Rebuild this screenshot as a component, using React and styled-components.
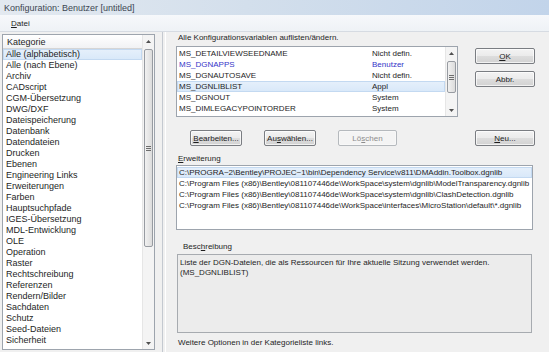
import React from 'react';
import styled, { createGlobalStyle, css } from 'styled-components';

const GlobalStyle = createGlobalStyle`
  html, body {
    margin: 0;
    padding: 0;
    background: #f0f0f0;
  }
  body {
    font-family: "Liberation Sans", Arial, sans-serif;
    font-size: 8px;
    color: #1e1e1e;
  }
`;

const Window = styled.div`
  width: 549px;
  height: 352px;
  display: flex;
  flex-direction: column;
  overflow: hidden;
  background: #f0f0f0;
`;

const TitleBar = styled.div`
  height: 15px;
  flex: none;
  display: flex;
  align-items: center;
  padding-left: 4px;
  background: linear-gradient(to right, #e3e9f0 0%, #d3dfec 45%, #c2d4ea 100%);
  color: #3d4652;
  font-size: 9px;
`;

const MenuBar = styled.div`
  height: 16px;
  flex: none;
  display: flex;
  align-items: center;
  padding-left: 11px;
  background: linear-gradient(#f6f8fb, #eef2f6);
  border-bottom: 1px solid #d6dbe2;
  font-size: 8px;
`;

const Mn = styled.span`
  text-decoration: underline;
`;

const Client = styled.div`
  flex: 1;
  display: flex;
  min-height: 0;
`;

const LeftPane = styled.div`
  width: 155px;
  flex: none;
  padding: 2px 0 2px 2px;
  box-sizing: border-box;
  display: flex;
  font-size: 9px;
`;

const ListFrame = styled.div`
  flex: 1;
  display: flex;
  border: 1px solid #9da4ad;
  background: #fff;
  min-width: 0;
`;

const ListBody = styled.div`
  flex: 1;
  display: flex;
  flex-direction: column;
  min-width: 0;
`;

const ListHeader = styled.div`
  height: 13px;
  flex: none;
  display: flex;
  align-items: center;
  padding-left: 4px;
  background: linear-gradient(#ffffff, #f1f2f4);
  border-bottom: 1px solid #d5d5d5;
`;

const selection = css`
  background: linear-gradient(#e6f0fb, #d8e8f9);
  box-shadow: inset 0 0 0 1px #c3d9f1;
`;

const CategoryItem = styled.div`
  height: 11px;
  line-height: 11px;
  padding-left: 3px;
  white-space: nowrap;
  ${(p) => p.$selected && selection}
`;

const ScrollBar = styled.div`
  width: 11px;
  flex: none;
  display: flex;
  flex-direction: column;
  background: #f4f4f4;
  border-left: 1px solid #e6e6e6;
`;

const ArrowBox = styled.div`
  height: 12px;
  flex: none;
  display: flex;
  align-items: center;
  justify-content: center;
`;

const Track = styled.div`
  flex: 1;
  display: flex;
  flex-direction: column;
  padding: 0 1px;
`;

const Thumb = styled.div`
  margin-top: ${(p) => p.$start}px;
  height: ${(p) => p.$size}px;
  border: 1px solid #979ba1;
  border-radius: 2px;
  background: linear-gradient(to right, #f1f1f1, #dcdcdc);
  display: flex;
  align-items: center;
  justify-content: center;
`;

const Splitter = styled.div`
  width: 12px;
  flex: none;
  display: flex;
  padding-left: 7px;
  box-sizing: border-box;
  &::before {
    content: '';
    width: 2px;
    border-left: 1px solid #c4c9d0;
    border-right: 1px solid #ffffff;
  }
`;

const RightPane = styled.div`
  flex: 1;
  display: flex;
  flex-direction: column;
  padding: 1px 14px 0 9px;
  min-width: 0;
`;

const TopSection = styled.div`
  display: flex;
`;

const MainCol = styled.div`
  width: 282px;
  flex: none;
  display: flex;
  flex-direction: column;
`;

const SideCol = styled.div`
  margin-left: 17px;
  width: 60px;
  display: flex;
  flex-direction: column;
  gap: 7px;
  padding-top: 15px;
`;

const Label = styled.div`
  height: 10px;
  line-height: 10px;
  padding-left: ${(p) => p.$indent || 2}px;
  margin-top: ${(p) => p.$top || 0}px;
  margin-bottom: ${(p) => p.$bottom || 0}px;
  white-space: nowrap;
`;

const VarFrame = styled.div`
  height: 71px;
  box-sizing: border-box;
  display: flex;
  border: 1px solid #9da4ad;
  background: #fff;
`;

const VarRows = styled.div`
  flex: 1;
  padding-top: 1px;
`;

const VarRow = styled.div`
  height: 11px;
  line-height: 11px;
  display: flex;
  color: ${(p) => (p.$blue ? '#3535c8' : 'inherit')};
  ${(p) => p.$selected && selection}
`;

const NameCell = styled.div`
  width: 193px;
  padding-left: 2px;
  white-space: nowrap;
`;

const ValueCell = styled.div`
  white-space: nowrap;
`;

const ButtonRow = styled.div`
  display: flex;
  gap: 22px;
  margin: 13px 0 0 14px;
`;

const Button = styled.div`
  width: ${(p) => p.$width || 60}px;
  height: 16px;
  box-sizing: border-box;
  display: flex;
  align-items: center;
  justify-content: center;
  border: 1px solid ${(p) => (p.$disabled ? '#b5b9bd' : '#7a7d82')};
  border-radius: 2px;
  color: ${(p) => (p.$disabled ? '#8d8d8d' : '#1e1e1e')};
  background: ${(p) =>
    p.$disabled
      ? '#f4f4f4'
      : 'linear-gradient(#f3f3f3 0%, #ebebeb 50%, #dddddd 51%, #d2d2d2 100%)'};
  box-shadow: inset 0 0 0 1px ${(p) => (p.$disabled ? '#f8f8f8' : 'rgba(255,255,255,0.7)')};
  white-space: nowrap;
  ${(p) => p.$bottom && 'margin-top: auto;'}
`;

const PathFrame = styled.div`
  width: 357px;
  height: 65px;
  box-sizing: border-box;
  border: 1px solid #9da4ad;
  background: #fff;
  padding-top: 1px;
`;

const PathRow = styled.div`
  height: 11px;
  line-height: 11px;
  padding-left: 2px;
  white-space: nowrap;
  ${(p) => p.$selected && selection}
`;

const DescBox = styled.div`
  width: 355px;
  height: 79px;
  box-sizing: border-box;
  margin-left: 1px;
  border: 1px solid #a7abb0;
  background: #ececec;
  padding: 3px 2px;
  line-height: 10px;
`;

const Arrow = ({ down }) => (
  <svg width="5" height="3" viewBox="0 0 5 3">
    <path d={down ? 'M0 0h5L2.5 3z' : 'M0 3h5L2.5 0z'} fill="#505050" />
  </svg>
);

const Grip = () => (
  <svg width="5" height="5" viewBox="0 0 5 5">
    <path d="M0 0.5h5M0 2.5h5M0 4.5h5" stroke="#6d6d6d" strokeWidth="1" />
  </svg>
);

const categories = [
  'Alle (alphabetisch)', 'Alle (nach Ebene)', 'Archiv', 'CADscript', 'CGM-Übersetzung',
  'DWG/DXF', 'Dateispeicherung', 'Datenbank', 'Datendateien', 'Drucken', 'Ebenen',
  'Engineering Links', 'Erweiterungen', 'Farben', 'Hauptsuchpfade', 'IGES-Übersetzung',
  'MDL-Entwicklung', 'OLE', 'Operation', 'Raster', 'Rechtschreibung', 'Referenzen',
  'Rendern/Bilder', 'Sachdaten', 'Schutz', 'Seed-Dateien', 'Sicherheit',
];

const variables = [
  { name: 'MS_DETAILVIEWSEEDNAME', level: 'Nicht defin.' },
  { name: 'MS_DGNAPPS', level: 'Benutzer', blue: true },
  { name: 'MS_DGNAUTOSAVE', level: 'Nicht defin.' },
  { name: 'MS_DGNLIBLIST', level: 'Appl', selected: true },
  { name: 'MS_DGNOUT', level: 'System' },
  { name: 'MS_DIMLEGACYPOINTORDER', level: 'System' },
];

const paths = [
  'C:\\PROGRA~2\\Bentley\\PROJEC~1\\bin\\Dependency Service\\v811\\DMAddin.Toolbox.dgnlib',
  'C:\\Program Files (x86)\\Bentley\\081107446de\\WorkSpace\\system\\dgnlib\\ModelTransparency.dgnlib',
  'C:\\Program Files (x86)\\Bentley\\081107446de\\WorkSpace\\system\\dgnlib\\ClashDetection.dgnlib',
  'C:\\Program Files (x86)\\Bentley\\081107446de\\WorkSpace\\interfaces\\MicroStation\\default\\*.dgnlib',
];

export default function App() {
  return (
    <Window>
      <GlobalStyle />
      <TitleBar>Konfiguration: Benutzer [untitled]</TitleBar>
      <MenuBar>
        <span><Mn>D</Mn>atei</span>
      </MenuBar>
      <Client>
        <LeftPane>
          <ListFrame>
            <ListBody>
              <ListHeader>Kate<Mn>g</Mn>orie</ListHeader>
              {categories.map((c, i) => (
                <CategoryItem key={c} $selected={i === 0}>{c}</CategoryItem>
              ))}
            </ListBody>
            <ScrollBar>
              <ArrowBox><Arrow /></ArrowBox>
              <Track>
                <Thumb $start={2} $size={196}><Grip /></Thumb>
              </Track>
              <ArrowBox><Arrow down /></ArrowBox>
            </ScrollBar>
          </ListFrame>
        </LeftPane>
        <Splitter />
        <RightPane>
          <TopSection>
            <MainCol>
              <Label $bottom={3}>Alle Konfigurationsvariablen auflisten/ändern.</Label>
              <VarFrame>
                <VarRows>
                  {variables.map((v) => (
                    <VarRow key={v.name} $blue={v.blue} $selected={v.selected}>
                      <NameCell>{v.name}</NameCell>
                      <ValueCell>{v.level}</ValueCell>
                    </VarRow>
                  ))}
                </VarRows>
                <ScrollBar>
                  <ArrowBox><Arrow /></ArrowBox>
                  <Track>
                    <Thumb $start={2} $size={30}><Grip /></Thumb>
                  </Track>
                  <ArrowBox><Arrow down /></ArrowBox>
                </ScrollBar>
              </VarFrame>
              <ButtonRow>
                <Button $width={52}><span><Mn>B</Mn>earbeiten...</span></Button>
                <Button $width={52}><span>Au<Mn>s</Mn>wählen...</span></Button>
                <Button $width={59} $disabled><span>Lö<Mn>s</Mn>chen</span></Button>
              </ButtonRow>
            </MainCol>
            <SideCol>
              <Button><span><Mn>O</Mn>K</span></Button>
              <Button>Abbr.</Button>
              <Button $bottom><span><Mn>N</Mn>eu...</span></Button>
            </SideCol>
          </TopSection>
          <Label $top={8} $bottom={1}><Mn>E</Mn>rweiterung</Label>
          <PathFrame>
            {paths.map((p, i) => (
              <PathRow key={p} $selected={i === 0}>{p}</PathRow>
            ))}
          </PathFrame>
          <Label $top={12} $bottom={2} $indent={7}>Besc<Mn>h</Mn>reibung</Label>
          <DescBox>
            Liste der DGN-Dateien, die als Ressourcen für Ihre aktuelle Sitzung verwendet werden.
            <br />
            (MS_DGNLIBLIST)
          </DescBox>
          <Label $top={5}>Weitere Optionen in der Kategorieliste links.</Label>
        </RightPane>
      </Client>
    </Window>
  );
}
